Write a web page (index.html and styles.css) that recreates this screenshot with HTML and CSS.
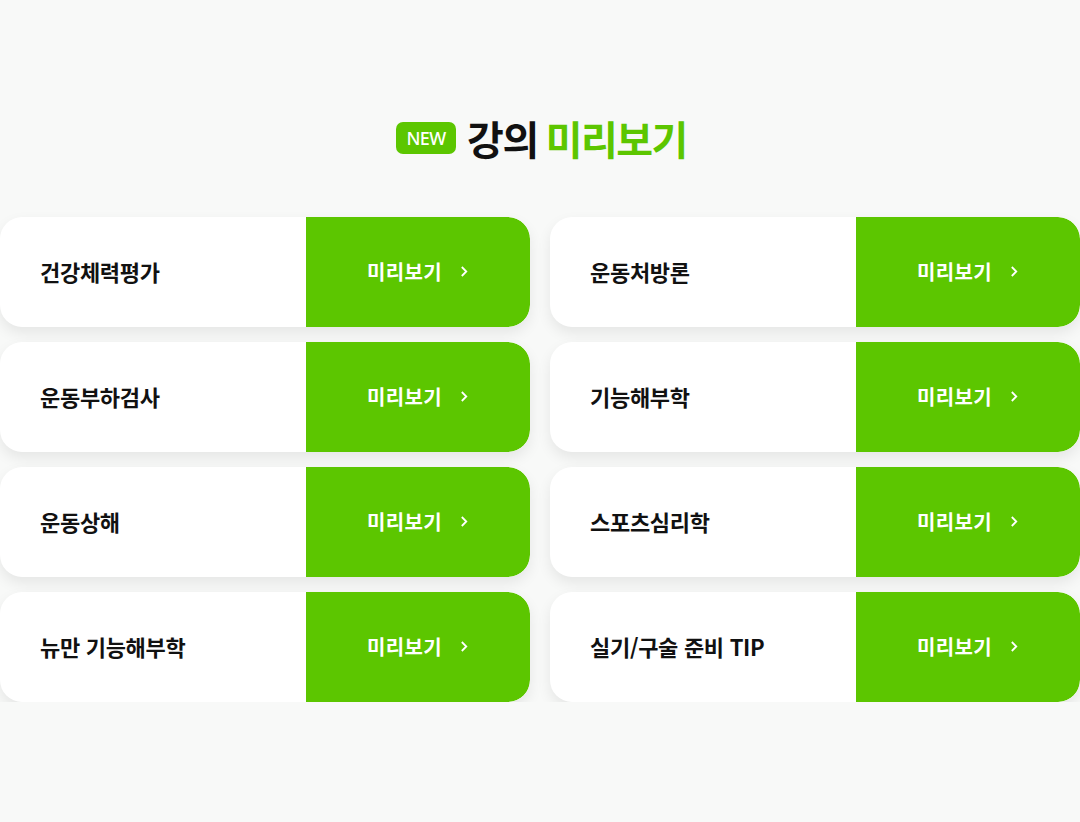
FILE: index.html
```html
<!DOCTYPE html>
<html lang="ko">
<head>
<meta charset="utf-8">
<link rel="stylesheet" href="styles.css">
</head>
<body>
<main class="page">
  <h2 class="title"><span class="badge">NEW</span><span class="t-black">강의</span> <span class="t-green">미리보기</span></h2>
  <div class="grid">
    <div class="card"><div class="name">건강체력평가</div><a class="btn">미리보기<svg class="chev" viewBox="0 0 10 14" width="9" height="13"><path d="M2 2l5 5-5 5" fill="none" stroke="#fff" stroke-width="2"/></svg></a></div>
    <div class="card"><div class="name">운동처방론</div><a class="btn">미리보기<svg class="chev" viewBox="0 0 10 14" width="9" height="13"><path d="M2 2l5 5-5 5" fill="none" stroke="#fff" stroke-width="2"/></svg></a></div>
    <div class="card"><div class="name">운동부하검사</div><a class="btn">미리보기<svg class="chev" viewBox="0 0 10 14" width="9" height="13"><path d="M2 2l5 5-5 5" fill="none" stroke="#fff" stroke-width="2"/></svg></a></div>
    <div class="card"><div class="name">기능해부학</div><a class="btn">미리보기<svg class="chev" viewBox="0 0 10 14" width="9" height="13"><path d="M2 2l5 5-5 5" fill="none" stroke="#fff" stroke-width="2"/></svg></a></div>
    <div class="card"><div class="name">운동상해</div><a class="btn">미리보기<svg class="chev" viewBox="0 0 10 14" width="9" height="13"><path d="M2 2l5 5-5 5" fill="none" stroke="#fff" stroke-width="2"/></svg></a></div>
    <div class="card"><div class="name">스포츠심리학</div><a class="btn">미리보기<svg class="chev" viewBox="0 0 10 14" width="9" height="13"><path d="M2 2l5 5-5 5" fill="none" stroke="#fff" stroke-width="2"/></svg></a></div>
    <div class="card"><div class="name">뉴만 기능해부학</div><a class="btn">미리보기<svg class="chev" viewBox="0 0 10 14" width="9" height="13"><path d="M2 2l5 5-5 5" fill="none" stroke="#fff" stroke-width="2"/></svg></a></div>
    <div class="card"><div class="name">실기/구술 준비 TIP</div><a class="btn">미리보기<svg class="chev" viewBox="0 0 10 14" width="9" height="13"><path d="M2 2l5 5-5 5" fill="none" stroke="#fff" stroke-width="2"/></svg></a></div>
  </div>
</main>
</body>
</html>
```
FILE: styles.css
```css
html, body {
  margin: 0;
  padding: 0;
  background: #f8f9f8;
}
body {
  font-family: "Noto Sans CJK KR", "Noto Sans", sans-serif;
  color: #111;
}
.page {
  width: 1080px;
  padding-top: 108px;
}
.title {
  margin: 0 0 49px;
  display: flex;
  justify-content: center;
  align-items: center;
  font-size: 40px;
  font-weight: 700;
  letter-spacing: -1.5px;
  line-height: 60px;
  height: 60px;
}
.badge {
  display: inline-flex;
  align-items: center;
  justify-content: center;
  width: 60px;
  height: 32px;
  border-radius: 7px;
  background: #5cc600;
  color: #fff;
  font-size: 18px;
  font-weight: 500;
  letter-spacing: -0.5px;
  line-height: 1;
  margin-right: 11px;
  margin-left: 3px;
  font-family: "Noto Sans", sans-serif;
}
.t-black { color: #111; }
.t-green { color: #5cc600; margin-left: 8px; }
.grid {
  display: grid;
  grid-template-columns: 530px 530px;
  column-gap: 20px;
  row-gap: 15px;
}
.card {
  display: flex;
  height: 110px;
  background: #fff;
  border-radius: 22px;
  box-shadow: 0 6px 14px rgba(0,0,0,0.08);
  overflow: hidden;
}
.name {
  flex: 1;
  display: flex;
  align-items: center;
  padding-left: 40px;
  padding-bottom: 2px;
  font-size: 22px;
  font-weight: 700;
  letter-spacing: -0.3px;
  color: #111;
}
.btn {
  width: 224px;
  background: #5cc600;
  display: flex;
  align-items: center;
  justify-content: center;
  gap: 18px;
  color: #fff;
  font-size: 20px;
  font-weight: 700;
  letter-spacing: 0.4px;
  border-radius: 0 22px 22px 0;
  padding-bottom: 2px;
  box-sizing: border-box;
}
.chev { display: block; }
```
